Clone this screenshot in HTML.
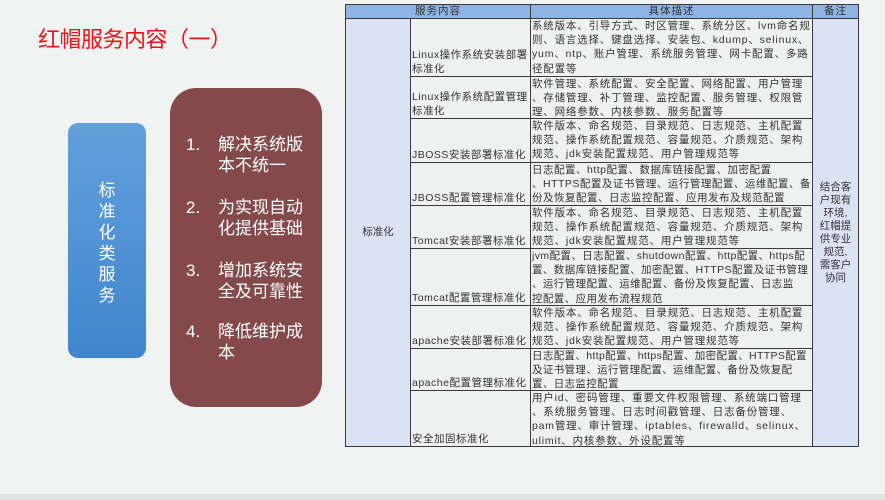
<!DOCTYPE html>
<html><head><meta charset="utf-8"><style>
body{margin:0;width:885px;height:500px;background:#f1f2f2;position:relative;overflow:hidden;font-family:"Liberation Sans","Noto Sans CJK SC",sans-serif}
.t{position:absolute;left:38px;top:22px;font-size:22px;color:#e8141c;letter-spacing:-0.5px}
.blue{position:absolute;left:68px;top:123px;width:78px;height:235px;border-radius:10px;background:linear-gradient(#63a0dc,#3f86cd);color:#fff;font-size:17px;text-align:center}
.blue div{position:absolute;left:0;right:0;top:57px;line-height:21px}
.mar{position:absolute;left:170px;top:88px;width:152px;height:319px;border-radius:26px;background:#844a4b;color:#fff;font-size:17px}
.it{position:absolute;left:16px;line-height:21px}
.it span{position:absolute;left:32px;width:100px}
.c{position:absolute;box-sizing:border-box;border:1px solid #3a3a3a;font-size:10.5px;color:#333;line-height:14.2px;overflow:hidden;background:#eff0f0}
.h{background:#8eb4e3;text-align:center;line-height:13px;letter-spacing:1px}
.b{background:#dbe2f4}
.l{display:flex;align-items:flex-end;padding-left:1px;letter-spacing:0.5px}
.d{padding-left:1px;letter-spacing:0.8px;white-space:nowrap}
.foot{position:absolute;left:0;top:494px;width:885px;height:6px;background:#e0e2e2}
</style></head><body>
<div class="t">红帽服务内容（一）</div>
<div class="blue"><div>标<br>准<br>化<br>类<br>服<br>务</div></div>
<div class="mar">
<div class="it" style="top:46px">1.<span>解决系统版本不统一</span></div>
<div class="it" style="top:109px">2.<span>为实现自动化提供基础</span></div>
<div class="it" style="top:172px">3.<span>增加系统安全及可靠性</span></div>
<div class="it" style="top:233px">4.<span>降低维护成本</span></div>
</div>
<div class="c h" style="left:345px;top:4px;width:186px;height:15px">服务内容</div>
<div class="c h" style="left:530px;top:4px;width:283px;height:15px">具体描述</div>
<div class="c h" style="left:812px;top:4px;width:47px;height:15px">备注</div>
<div class="c b" style="left:345px;top:18px;width:66px;height:429px;display:flex;align-items:center;justify-content:center">标准化</div>
<div class="c b" style="left:812px;top:18px;width:47px;height:429px;display:flex;align-items:center;justify-content:center;text-align:center;line-height:13px">结合客<br>户现有<br>环境,<br>红帽提<br>供专业<br>规范,<br>需客户<br>协同</div>

<div class="c l" style="left:410px;top:18px;width:121px;height:59px">Linux操作系统安装部署标准化</div>
<div class="c d" style="left:530px;top:18px;width:283px;height:59px">系统版本、引导方式、时区管理、系统分区、lvm命名规<br>则、语言选择、键盘选择、安装包、kdump、selinux、<br>yum、ntp、账户管理、系统服务管理、网卡配置、多路<br>径配置等</div>
<div class="c l" style="left:410px;top:76px;width:121px;height:43px">Linux操作系统配置管理标准化</div>
<div class="c d" style="left:530px;top:76px;width:283px;height:43px">软件管理、系统配置、安全配置、网络配置、用户管理<br>、存储管理、补丁管理、监控配置、服务管理、权限管<br>理、网络参数、内核参数、服务配置等</div>
<div class="c l" style="left:410px;top:118px;width:121px;height:45px">JBOSS安装部署标准化</div>
<div class="c d" style="left:530px;top:118px;width:283px;height:45px">软件版本、命名规范、目录规范、日志规范、主机配置<br>规范、操作系统配置规范、容量规范、介质规范、架构<br>规范、jdk安装配置规范、用户管理规范等</div>
<div class="c l" style="left:410px;top:162px;width:121px;height:44px">JBOSS配置管理标准化</div>
<div class="c d" style="left:530px;top:162px;width:283px;height:44px;letter-spacing:0.5px">日志配置、http配置、数据库链接配置、加密配置<br>、HTTPS配置及证书管理、运行管理配置、运维配置、备<br>份及恢复配置、日志监控配置、应用发布及规范配置</div>
<div class="c l" style="left:410px;top:205px;width:121px;height:44px">Tomcat安装部署标准化</div>
<div class="c d" style="left:530px;top:205px;width:283px;height:44px">软件版本、命名规范、目录规范、日志规范、主机配置<br>规范、操作系统配置规范、容量规范、介质规范、架构<br>规范、jdk安装配置规范、用户管理规范等</div>
<div class="c l" style="left:410px;top:248px;width:121px;height:58px">Tomcat配置管理标准化</div>
<div class="c d" style="left:530px;top:248px;width:283px;height:58px;letter-spacing:0.4px">jvm配置、日志配置、shutdown配置、http配置、https配<br>置、数据库链接配置、加密配置、HTTPS配置及证书管理<br>、运行管理配置、运维配置、备份及恢复配置、日志监<br>控配置、应用发布流程规范</div>
<div class="c l" style="left:410px;top:305px;width:121px;height:44px">apache安装部署标准化</div>
<div class="c d" style="left:530px;top:305px;width:283px;height:44px">软件版本、命名规范、目录规范、日志规范、主机配置<br>规范、操作系统配置规范、容量规范、介质规范、架构<br>规范、jdk安装配置规范、用户管理规范等</div>
<div class="c l" style="left:410px;top:348px;width:121px;height:43px">apache配置管理标准化</div>
<div class="c d" style="left:530px;top:348px;width:283px;height:43px;letter-spacing:0.35px">日志配置、http配置、https配置、加密配置、HTTPS配置<br>及证书管理、运行管理配置、运维配置、备份及恢复配<br>置、日志监控配置</div>
<div class="c l" style="left:410px;top:390px;width:121px;height:57px">安全加固标准化</div>
<div class="c d" style="left:530px;top:390px;width:283px;height:57px">用户id、密码管理、重要文件权限管理、系统端口管理<br>、系统服务管理、日志时间戳管理、日志备份管理、<br>pam管理、审计管理、iptables、firewalld、selinux、<br>ulimit、内核参数、外设配置等</div>
<div class="foot"></div>
</body></html>
